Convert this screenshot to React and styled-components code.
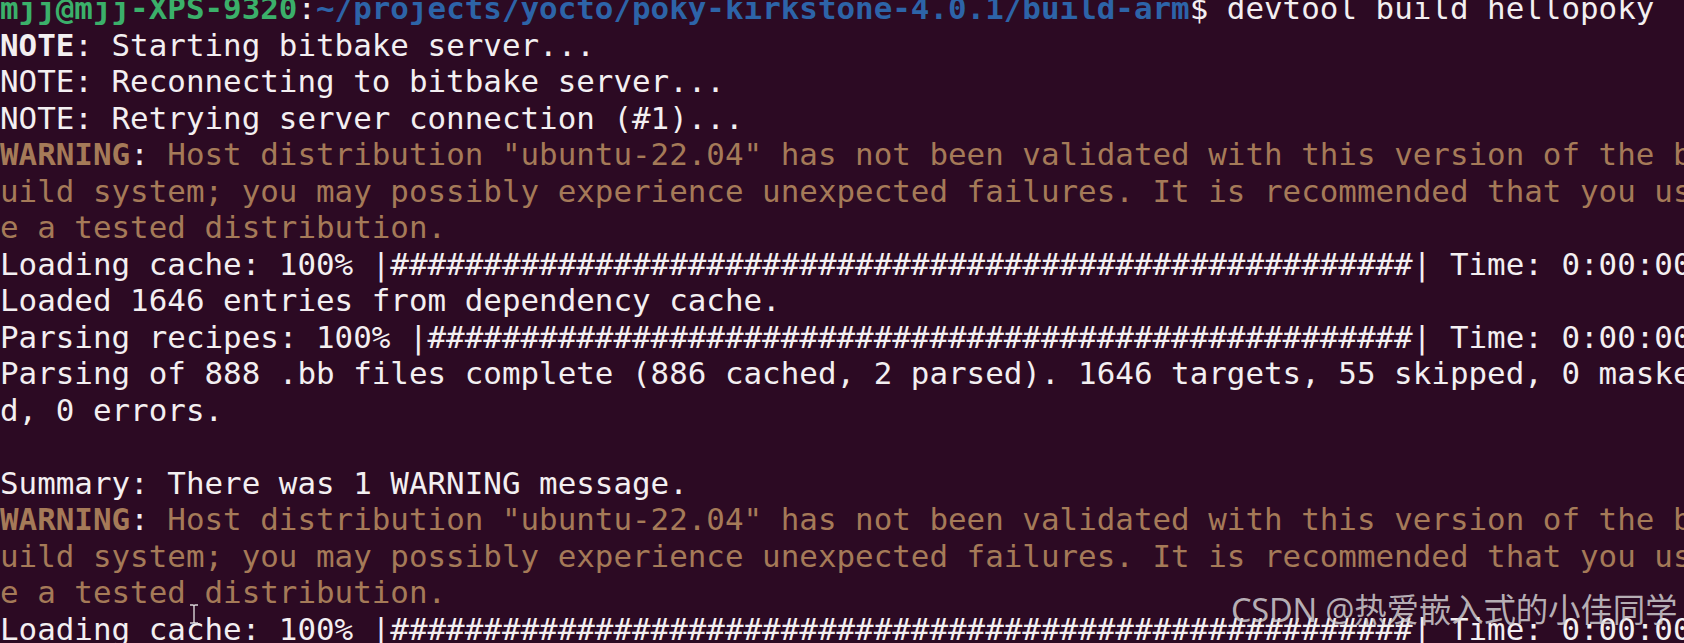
import React from "react";
import styled, { createGlobalStyle } from "styled-components";

const Global = createGlobalStyle`
  html, body {
    margin: 0;
    padding: 0;
    background: #2c0a23;
    overflow: hidden;
  }
  #root { width: 1684px; height: 643px; }
`;

const Window = styled.div`
  position: relative;
  width: 1684px;
  height: 643px;
  overflow: hidden;
  background: #2c0a23;
`;

const Screen = styled.div`
  display: flex;
  flex-direction: column;
  margin-top: -10px;
  font-family: "DejaVu Sans Mono", "Liberation Mono", monospace;
  font-size: 30.88px;
  line-height: 36.5px;
  color: #f3eff1;
  white-space: pre;
`;

const Line = styled.div`
  height: 36.5px;
  overflow: visible;
  color: ${(p) => (p.$tone === "warn" ? "#a57a58" : "#f3eff1")};
`;

const Bold = styled.span`
  font-weight: bold;
  color: ${(p) => p.$color || "inherit"};
`;

const Plain = styled.span`
  color: ${(p) => p.$color || "inherit"};
`;

const Watermark = styled.div`
  position: absolute;
  left: 1231px;
  top: 589px;
  font-family: "Noto Sans", "Noto Sans CJK SC", sans-serif;
  font-size: 32.5px;
  line-height: 42px;
  color: rgba(214, 212, 214, 0.82);
  white-space: nowrap;
  letter-spacing: -0.2px;
`;

const Cursor = styled.svg`
  position: absolute;
  left: 188px;
  top: 604px;
`;

const bar = (n) => "#".repeat(n);

const warnLines = [
  <Line key="w1" $tone="warn">
    <Bold>WARNING</Bold>
    <Plain $color="#f3eff1">:</Plain> Host distribution "ubuntu-22.04" has not been validated with this version of the b
  </Line>,
  <Line key="w2" $tone="warn">uild system; you may possibly experience unexpected failures. It is recommended that you us</Line>,
  <Line key="w3" $tone="warn">e a tested distribution.</Line>,
];

export default function App() {
  return (
    <Window>
      <Global />
      <Screen>
        <Line>
          <Bold $color="#3bb06a">mjj@mjj-XPS-9320</Bold>
          <Plain>:</Plain>
          <Bold $color="#2d64a8">~/projects/yocto/poky-kirkstone-4.0.1/build-arm</Bold>
          <Plain>$ devtool build hellopoky</Plain>
        </Line>
        <Line>
          <Bold>NOTE</Bold>: Starting bitbake server...
        </Line>
        <Line>NOTE: Reconnecting to bitbake server...</Line>
        <Line>NOTE: Retrying server connection (#1)...</Line>
        {warnLines}
        <Line>{`Loading cache: 100% |${bar(55)}| Time: 0:00:00`}</Line>
        <Line>Loaded 1646 entries from dependency cache.</Line>
        <Line>{`Parsing recipes: 100% |${bar(53)}| Time: 0:00:00`}</Line>
        <Line>Parsing of 888 .bb files complete (886 cached, 2 parsed). 1646 targets, 55 skipped, 0 maske</Line>
        <Line>d, 0 errors.</Line>
        <Line> </Line>
        <Line>Summary: There was 1 WARNING message.</Line>
        {warnLines.map((l) => React.cloneElement(l, { key: l.key + "b" }))}
        <Line>{`Loading cache: 100% |${bar(55)}| Time: 0:00:00`}</Line>
      </Screen>
      <Watermark>CSDN @热爱嵌入式的小佳同学</Watermark>
      <Cursor width="12" height="20" viewBox="0 0 12 20">
        <path d="M2 1h3l1 1 1-1h3M6 2v16M2 19h3l1-1 1 1h3" stroke="#d8d4d6" strokeWidth="1.4" fill="none" />
      </Cursor>
    </Window>
  );
}
